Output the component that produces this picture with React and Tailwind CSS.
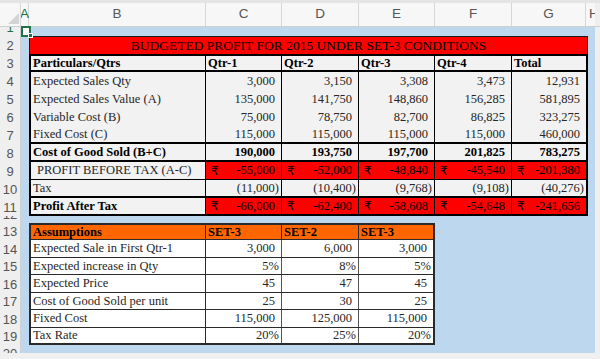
import React from "react";

const W = ["w-[175px]", "w-[76px]", "w-[77px]", "w-[76px]", "w-[77px]", "w-[74px]"];
const AW = ["w-[175px]", "w-[76px]", "w-[77px]", "w-[74px]"];

const rowHeights = [
  "h-[9px]", "h-[18px]", "h-[18px]", "h-[18px]", "h-[18px]", "h-[18px]", "h-[18px]",
  "h-[18px]", "h-[18px]", "h-[18px]", "h-[18px]", "h-[7px]", "h-[17px]", "h-[18px]",
  "h-[17px]", "h-[18px]", "h-[17px]", "h-[18px]", "h-[17px]", "h-[17px]",
];

function ColHeader() {
  const cols = [
    ["B", "w-[177px]"],
    ["C", "w-[76px]"],
    ["D", "w-[77px]"],
    ["E", "w-[76px]"],
    ["F", "w-[77px]"],
    ["G", "w-[74px]"],
  ];
  return (
    <div className="h-[24px] shrink-0 flex bg-[#f7f7f7] border-b border-[#cfcfcf] box-border font-['Liberation_Sans',sans-serif] text-[13.5px] text-[#555]">
      <div className="w-[21px] shrink-0 relative border-r border-[#d6d6d6] box-border">
        <svg className="absolute left-[8px] top-[10px]" width="11" height="11" viewBox="0 0 11 11">
          <polygon points="11,0 11,11 0,11" fill="#d4d4d4" />
        </svg>
      </div>
      <div className="w-[8px] shrink-0 flex items-end justify-center pb-[2px] text-[#217346] border-r border-[#d6d6d6] box-border overflow-visible">
        A
      </div>
      {cols.map(([l, w]) => (
        <div key={l} className={`${w} shrink-0 flex items-end justify-center pb-[2px] border-r border-[#d6d6d6] box-border`}>
          {l}
        </div>
      ))}
      <div className="w-[9px] shrink-0 overflow-hidden flex items-end pb-[2px] pl-[3px]">H</div>
      <div className="flex-1 bg-[#efefef]" />
    </div>
  );
}

function RowHeaders() {
  return (
    <div className="w-[21px] shrink-0 flex flex-col bg-[#efefef] border-r border-[#d0d0d0] box-border font-['Liberation_Sans',sans-serif] text-[13px] text-[#555]">
      {rowHeights.map((h, i) => (
        <div
          key={i}
          className={`${h} shrink-0 overflow-hidden flex items-end justify-center ${i === 0 ? "text-[#217346]" : ""}`}
        >
          <span className="h-[17px] leading-[17px] shrink-0">{i + 1}</span>
        </div>
      ))}
    </div>
  );
}

function Banner() {
  return (
    <div className="w-[559px] h-[18px] shrink-0 bg-[#ff0000] border border-b-0 border-[#1a1a1a] box-border flex items-center justify-center text-[13.5px] text-black leading-none">
      BUDGETED PROFIT FOR 2015 UNDER SET-3 CONDITIONS
    </div>
  );
}

const mainRows = [
  { label: "Particulars/Qtrs", v: ["Qtr-1", "Qtr-2", "Qtr-3", "Qtr-4", "Total"], type: "head", h: "h-[16px]", bb: "border-b-2" },
  { label: "Expected Sales Qty", v: ["3,000", "3,150", "3,308", "3,473", "12,931"], h: "h-[18px]", bb: "" },
  { label: "Expected Sales Value (A)", v: ["135,000", "141,750", "148,860", "156,285", "581,895"], h: "h-[18px]", bb: "" },
  { label: "Variable Cost (B)", v: ["75,000", "78,750", "82,700", "86,825", "323,275"], h: "h-[18px]", bb: "" },
  { label: "Fixed Cost (C)", v: ["115,000", "115,000", "115,000", "115,000", "460,000"], h: "h-[18px]", bb: "border-b-2" },
  { label: "Cost of Good Sold (B+C)", v: ["190,000", "193,750", "197,700", "201,825", "783,275"], type: "bold", h: "h-[18px]", bb: "border-b-2" },
  { label: "PROFIT BEFORE TAX (A-C)", v: ["-55,000", "-52,000", "-48,840", "-45,540", "-201,380"], type: "red", h: "h-[18px]", bb: "border-b" },
  { label: "Tax", v: ["(11,000)", "(10,400)", "(9,768)", "(9,108)", "(40,276)"], type: "paren", h: "h-[18px]", bb: "border-b-2" },
  { label: "Profit After Tax", v: ["-66,000", "-62,400", "-58,608", "-54,648", "-241,656"], type: "redbold", h: "h-[16px]", bb: "" },
];

function MainTable() {
  return (
    <div className="w-[559px] shrink-0 border-2 border-black box-border flex flex-col bg-[#f2f2f2] text-[12.5px] leading-none">
      {mainRows.map((r, ri) => {
        const boldLabel = r.type === "head" || r.type === "bold" || r.type === "redbold";
        const isRed = r.type === "red" || r.type === "redbold";
        return (
          <div key={ri} className={`${r.h} ${r.bb} border-black box-border flex shrink-0`}>
            <div
              className={`${W[0]} shrink-0 border-r border-black box-border flex items-center ${
                r.type === "red" ? "pl-[6px] text-[#333]" : "pl-[2px]"
              } ${boldLabel ? "font-bold text-black" : "text-[#262626]"}`}
            >
              {r.label}
            </div>
            {r.v.map((v, i) => {
              const last = i === 4;
              const w = W[i + 1];
              const br = last ? "" : "border-r border-black";
              if (r.type === "head") {
                return (
                  <div key={i} className={`${w} ${br} box-border shrink-0 flex items-center pl-[2px] font-bold text-black`}>
                    {v}
                  </div>
                );
              }
              if (isRed) {
                return (
                  <div key={i} className={`${w} ${br} box-border shrink-0 flex items-center justify-between pl-[5px] pr-[6px] bg-[#ff0000] text-black`}>
                    <span className="font-['DejaVu_Sans',sans-serif] text-[12px]">₹</span>
                    <span>{v}</span>
                  </div>
                );
              }
              return (
                <div
                  key={i}
                  className={`${w} ${br} box-border shrink-0 flex items-center justify-end ${
                    r.type === "paren" ? "pr-[2px]" : "pr-[6px]"
                  } ${r.type === "bold" ? "font-bold text-black" : "text-[#262626]"}`}
                >
                  {v}
                </div>
              );
            })}
          </div>
        );
      })}
    </div>
  );
}

const assumRows = [
  { label: "Expected Sale in First Qtr-1", v: ["3,000", "6,000", "3,000"], h: "h-[18px]" },
  { label: "Expected increase in Qty", v: ["5%", "8%", "5%"], pct: true, h: "h-[17px]" },
  { label: "Expected Price", v: ["45", "47", "45"], h: "h-[18px]" },
  { label: "Cost of Good Sold per unit", v: ["25", "30", "25"], h: "h-[17px]" },
  { label: "Fixed Cost", v: ["115,000", "125,000", "115,000"], h: "h-[18px]" },
  { label: "Tax Rate", v: ["20%", "25%", "20%"], pct: true, h: "h-[15px]", last: true },
];

function Assumptions() {
  return (
    <div className="w-[406px] shrink-0 border-2 border-[#2a2a2a] box-border flex flex-col bg-white text-[12.5px] leading-none">
      <div className="h-[15px] shrink-0 flex bg-[#ff6600] border-b border-[#2a2a2a] box-border font-bold text-black">
        <div className={`${AW[0]} shrink-0 border-r border-[#2a2a2a] box-border flex items-center pl-[2px]`}>Assumptions</div>
        <div className={`${AW[1]} shrink-0 border-r border-[#2a2a2a] box-border flex items-center pl-[2px]`}>SET-3</div>
        <div className={`${AW[2]} shrink-0 border-r border-[#2a2a2a] box-border flex items-center pl-[2px]`}>SET-2</div>
        <div className={`${AW[3]} shrink-0 box-border flex items-center pl-[2px]`}>SET-3</div>
      </div>
      {assumRows.map((r, ri) => (
        <div key={ri} className={`${r.h} shrink-0 flex ${r.last ? "" : "border-b border-[#2a2a2a]"} box-border text-[#262626]`}>
          <div className={`${AW[0]} shrink-0 border-r border-[#2a2a2a] box-border flex items-center pl-[2px]`}>{r.label}</div>
          {r.v.map((v, i) => (
            <div
              key={i}
              className={`${AW[i + 1]} shrink-0 ${i < 2 ? "border-r border-[#555]" : ""} box-border flex items-center justify-end ${
                r.pct ? "pr-[2px]" : "pr-[6px]"
              }`}
            >
              {v}
            </div>
          ))}
        </div>
      ))}
    </div>
  );
}

export default function App() {
  return (
    <div className="w-[600px] h-[359px] overflow-hidden bg-[#f0f0f0] flex flex-col relative font-['Liberation_Serif','DejaVu_Serif',serif]">
      <div className="h-[3px] shrink-0 bg-[#e4e4e4]" />
      <ColHeader />
      <div className="h-[326px] shrink-0 flex overflow-hidden">
        <RowHeaders />
        <div className="w-[574px] shrink-0 bg-[#bdd7ee] pl-[8px] flex flex-col">
          <div className="h-[9px] shrink-0" />
          <Banner />
          <MainTable />
          <div className="h-[7px] shrink-0" />
          <Assumptions />
        </div>
        <div className="flex-1 bg-[#efefef]" />
      </div>
      <div className="flex-1 bg-[#f0f0f0]" />
      <div className="absolute left-[21px] top-[26px] w-[10px] h-[11px] border-2 border-[#217346] bg-white box-border" />
      <div className="absolute left-[28px] top-[33px] w-[5px] h-[5px] bg-[#217346] border border-white box-border" />
    </div>
  );
}
